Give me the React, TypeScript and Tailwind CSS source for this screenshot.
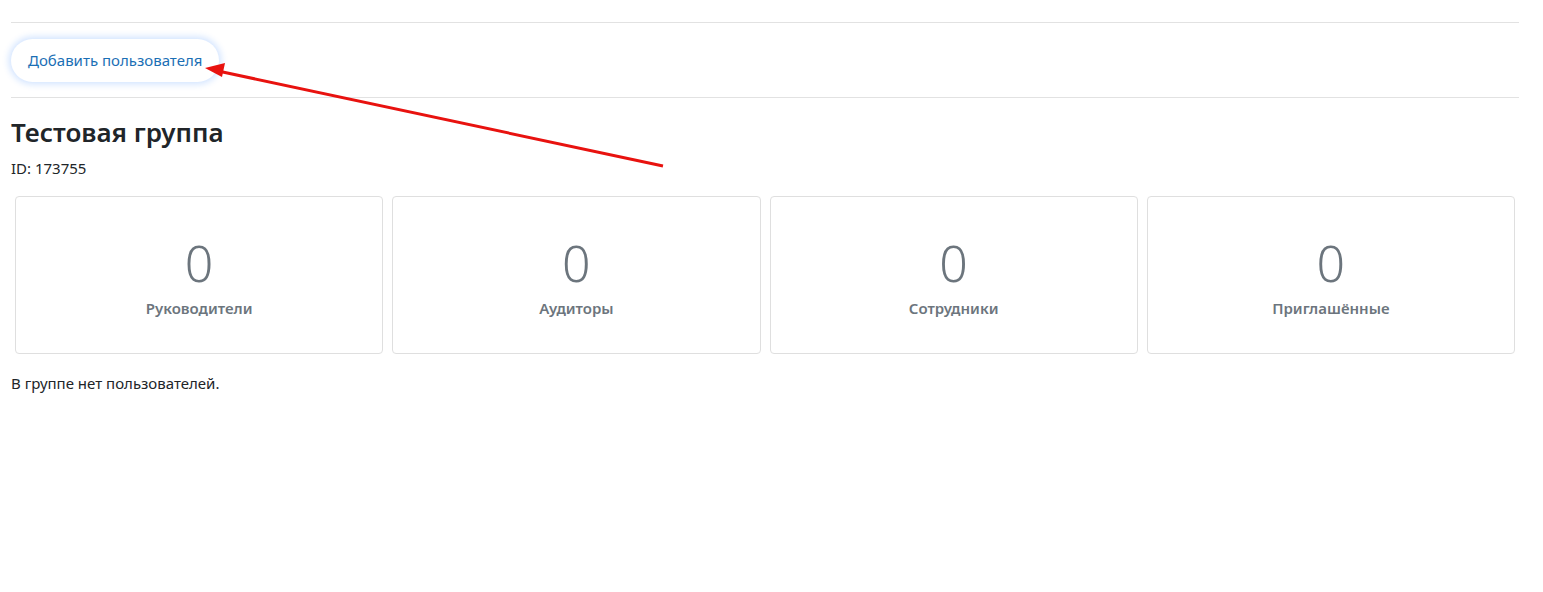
import React from "react";

const cards = ["Руководители", "Аудиторы", "Сотрудники", "Приглашённые"];

export default function App() {
  return (
    <div className="relative min-h-[592px] bg-white text-[#212529]" style={{ fontFamily: '"Noto Sans", "Open Sans", sans-serif' }}>
      <div className="w-[1508px] ml-[11px] pt-[22px]">
        <div className="border-t border-[#e2e2e2]" />
        <div className="pt-[16px] pb-[15px]">
          <button className="h-[43px] px-[17px] rounded-full bg-white text-[15px] text-[#1b6fb5] shadow-[0_0_7px_2px_rgba(13,110,253,0.2)]">
            Добавить пользователя
          </button>
        </div>
        <div className="border-t border-[#e2e2e2]" />
        <h2 className="mt-[17px] text-[26px] font-semibold leading-[34px] text-[#212529]">Тестовая группа</h2>
        <div className="mt-[8px] text-[15px] leading-[22px]">ID: 173755</div>
        <div className="mt-[17px] mx-[4px] grid grid-cols-4 gap-[9px]">
          {cards.map((c) => (
            <div key={c} className="h-[158px] rounded-[4px] border border-[#dfdfdf] flex flex-col items-center pt-[35px]">
              <div className="text-[50px] font-light leading-[62px] text-[#6c757d]">0</div>
              <div className="mt-[3px] text-[15px] font-semibold leading-[22px] text-[#6c757d]">{c}</div>
            </div>
          ))}
        </div>
        <div className="mt-[18px] text-[15px] leading-[22px]">В группе нет пользователей.</div>
      </div>
      <svg className="absolute left-0 top-0 pointer-events-none" width="1543" height="592">
        <line x1="663" y1="166" x2="218" y2="71" stroke="#e8120f" strokeWidth="3" />
        <polygon points="205,68 225,63 222,77" fill="#e8120f" />
      </svg>
    </div>
  );
}
